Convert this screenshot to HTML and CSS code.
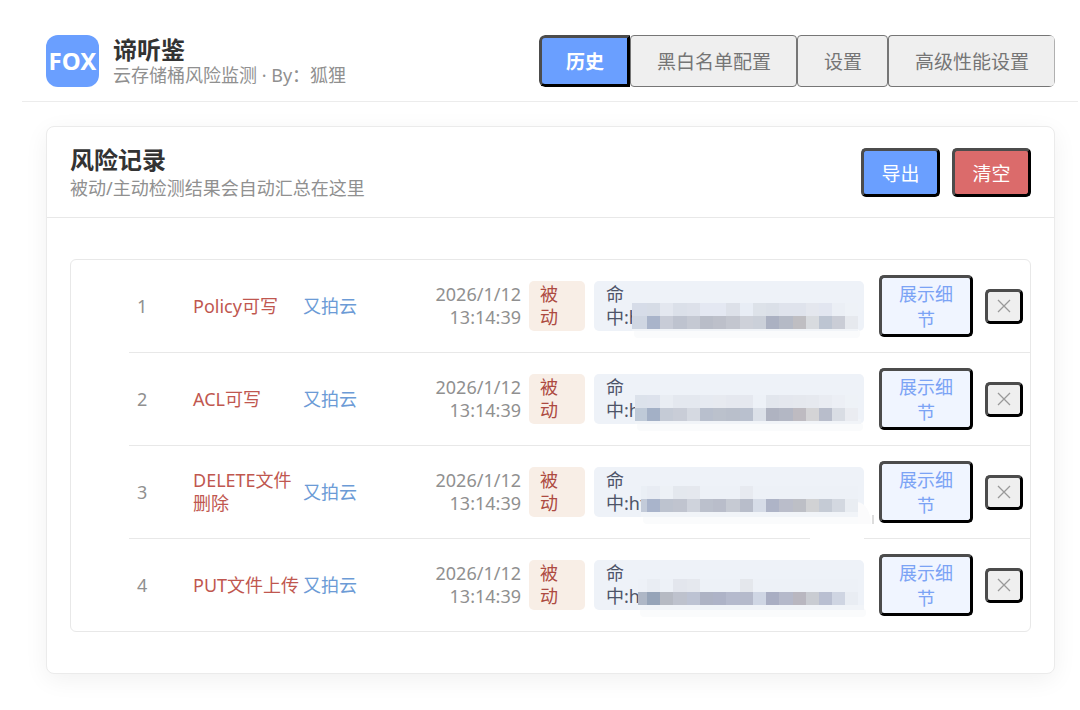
FILE: index.html
```html
<!DOCTYPE html>
<html lang="zh-CN">
<head>
    <meta charset="UTF-8">
    <meta name="viewport" content="width=device-width, initial-scale=1.0">
    <title>谛听鉴</title>
    <link rel="stylesheet" href="styles.css">
</head>
<body>
    <header class="topbar">
        <div class="brand">
            <div class="logo">FOX</div>
            <div>
                <h1 class="brand-name">谛听鉴</h1>
                <div class="subtitle">云存储桶风险监测 · By：狐狸</div>
            </div>
        </div>
        <nav class="tabs">
            <button class="tab active">历史</button>
            <button class="tab">黑白名单配置</button>
            <button class="tab">设置</button>
            <button class="tab">高级性能设置</button>
        </nav>
    </header>

    <main class="card">
        <div class="card-header">
            <div>
                <h2 class="card-title">风险记录</h2>
                <div class="subtitle">被动/主动检测结果会自动汇总在这里</div>
            </div>
            <div class="actions">
                <button class="btn btn-primary">导出</button>
                <button class="btn btn-danger">清空</button>
            </div>
        </div>
        <div class="card-body">
            <ol class="records" id="records"></ol>
        </div>
    </main>

    <script>
        // low / high: colours of the lower and upper mosaic cells over the url
        const records = [
            {
                type: "Policy可写", start: 0, y: 14,
                low: ["#cfd6e2", "#a9b4ca", "#c8ccd7", "#bec3cf", "#c5c9d3", "#b9bdc8", "#bdc0ca", "#c3c6cf", "#ced1d9", "#cbd0d9", "#abb1c2", "#b5bac6", "#bfbec2", "#d8dbdf", "#bdc5d2", "#cacdd6", "#e6e9ee"],
                high: ["#d6dce8", "#d6dce6", "#e3e7ef", "#dbe0e9", "#dde1ea", "#e4e8f2", "#e4e8f2", "#dde1e9", "#e8edf5", "#dde2e9", "#dbe0e8", "#dfe3ec", "#dfe3ec", "#e4e7ee", "#e2e6f0", "#ebeff5", "#eef2f7"]
            },
            {
                type: "ACL可写", start: 3, y: 13,
                low: ["#bfcad8", "#a3b0c6", "#c5cbd6", "#c9cdd7", "#d5d9e1", "#b8bfcd", "#bbc1cc", "#b9bfcb", "#b9c0ce", "#dbe0e8", "#afb3c1", "#b3b7c4", "#bebbc1", "#d4d4d6", "#b8bdcb", "#d9dde4", "#eaecf1"],
                high: ["#dce2eb", "#dde2ec", "#e9edf3", "#e4e8ef", "#e4e8ef", "#e6eaf1", "#e7eaf0", "#e5e8ef", "#e5e8ef", "#edf1f7", "#e2e6ed", "#e4e7ee", "#e5e8ee", "#e6e9ef", "#e9ecf2", "#eceff5", "#eef2f7"]
            },
            {
                type: "DELETE文件删除", start: 9, y: 11, erased: true,
                low: ["#c3cbd9", "#a9b4cb", "#bdc3cf", "#c0c4cf", "#cfd3dc", "#bbc0cc", "#b9bdca", "#c6cad3", "#b8bdca", "#d6dce7", "#aeb4c7", "#babdca", "#bdbfc6", "#d1d2d4", "#c5cbd5", "#d3d8e0", "#e9edf2"],
                high: ["#eaeff5", "#e8ecf3", "#edf1f6", "#e4e8ee", "#e5e8ee", "#edf1f7", "#edf1f7", "#edf1f7", "#e7eaf0", "#edf1f7", "#edf1f7", "#edf1f7", "#edf1f7", "#edf1f7", "#edf1f7", "#edf1f7", "#edf1f7"]
            },
            {
                type: "PUT文件上传", start: 6, y: 11,
                low: ["#aeb7c6", "#96a4b8", "#b6bac3", "#bec2cd", "#bdc3d3", "#aeb3c4", "#aeb3c7", "#b5bacd", "#b5bacb", "#cfd6e4", "#a9aec3", "#b5b9ca", "#b9b7c0", "#c9ccd2", "#b9bfd1", "#cfd5e2", "#e9edf3"],
                high: ["#edf1f7", "#e9edf3", "#edf1f7", "#e3e6ed", "#e5e8ee", "#edf1f7", "#edf1f7", "#edf1f7", "#e4e7ec", "#edf1f7", "#edf1f7", "#edf1f7", "#edf1f7", "#edf1f7", "#edf1f7", "#edf1f7", "#edf1f7"]
            }
        ];

        const cellX = [0, 15, 28, 41, 55, 68, 81, 94, 108, 121, 134, 147, 161, 174, 187, 200, 213, 226];

        function cells(colors, start, y) {
            return colors.map((color, i) => {
                const x = Math.max(cellX[i], start);
                return `<rect x="${x}" y="${y}" width="${cellX[i + 1] - x}" height="13" fill="${color}"/>`;
            }).join("");
        }

        function mosaic(r) {
            return `
                <svg class="mosaic" viewBox="0 0 244 44" aria-hidden="true">
                    <rect x="${r.start + 2}" y="27" width="226" height="9" rx="4" fill="#fafbfc"/>
                    <rect x="${r.start}" y="24" width="226" height="5" fill="#f1f4f8"/>
                    ${cells(r.high, r.start, r.y - 13)}
                    ${cells(r.low, r.start, r.y)}
                    ${r.erased ? `
                    <path d="M226 14 Q238 17 239 36 H226 Z" fill="#fbfbfc"/>
                    <path d="M241 27 V36" stroke="#dddddd" stroke-width="2"/>
                    <rect x="178" y="48" width="54" height="5" fill="#ffffff"/>` : ""}
                </svg>`;
        }

        document.getElementById("records").innerHTML = records.map((r, i) => `
            <li class="record">
                <span class="record-index">${i + 1}</span>
                <span class="record-type">${r.type}</span>
                <span class="record-vendor">又拍云</span>
                <span class="record-time">2026/1/12 13:14:39</span>
                <span class="record-mode">被动</span>
                <span class="record-hit">命<br>中:ht${mosaic(r)}</span>
                <button class="btn-detail">展示细节</button>
                <button class="btn-remove" aria-label="删除">
                    <svg width="14" height="14" viewBox="0 0 14 14"><path d="M1 1 L13 13 M13 1 L1 13" fill="none" stroke="#999999" stroke-width="1.3"/></svg>
                </button>
            </li>
        `).join("");
    </script>
</body>
</html>
```
FILE: styles.css
```css
* {
    box-sizing: border-box;
}
body {
    margin: 0;
    padding: 20px 2px 36px 22px;
    background: #ffffff;
    color: #333333;
    font-family: "Noto Sans", "Noto Sans CJK SC", sans-serif;
    font-size: 18px;
    line-height: 23px;
}
button {
    font-family: inherit;
    cursor: pointer;
}
h1, h2 {
    margin: 0;
}
.topbar {
    display: flex;
    justify-content: space-between;
    align-items: center;
    padding: 15px 23px 14px 24px;
    border-bottom: 1px solid #ececec;
}
.brand {
    display: flex;
    align-items: center;
    gap: 14px;
}
.logo {
    width: 53px;
    height: 52px;
    border-radius: 12px;
    background: #6a9fff;
    color: #ffffff;
    font-size: 24px;
    font-weight: bold;
    line-height: 51px;
    display: flex;
    justify-content: center;
}
.brand-name {
    padding-top: 2px;
    font-size: 24px;
    line-height: 26px;
}
.subtitle {
    color: #909090;
    line-height: 24px;
}
.tabs {
    display: flex;
    border-radius: 6px;
    overflow: hidden;
}
.tab {
    padding: 14px 25px 12px 26px;
    border: 1px solid #767676;
    border-radius: 4px;
    background: #efefef;
    color: #757575;
    font-size: 19px;
    line-height: 24px;
}
.tab:last-child {
    border-right-color: #b0b0b0;
}
.tab.active {
    padding: 12px 23px 10px 24px;
    border: 3px solid;
    border-color: #4c4c4c #000000 #000000 #4c4c4c;
    border-radius: 6px 0 0 6px;
    background: #6a9fff;
    color: #ffffff;
    font-weight: bold;
}
.card {
    margin: 24px 23px 0 24px;
    border: 1px solid #ebebeb;
    border-radius: 8px;
    background: #ffffff;
    box-shadow: 0 6px 24px rgba(0, 0, 0, 0.06);
}
.card-header {
    display: flex;
    justify-content: space-between;
    align-items: center;
    padding: 17px 23px;
    border-bottom: 1px solid #e8e8e8;
}
.card-title {
    font-size: 24px;
    line-height: 32px;
}
.actions {
    display: flex;
    gap: 12px;
}
.btn {
    min-width: 79px;
    padding: 11px 17px 8px;
    border: 3px solid;
    border-color: #4c4c4c #000000 #000000 #4c4c4c;
    border-radius: 5px;
    color: #ffffff;
    font-size: 19px;
    line-height: 24px;
}
.btn-primary {
    background: #6a9fff;
}
.btn-danger {
    background: #db6b6b;
}
.card-body {
    padding: 41px 23px;
}
.records {
    margin: 0;
    padding: 0 0 0 58px;
    list-style: none;
    border: 1px solid #e8e8e8;
    border-radius: 6px;
}
.record {
    display: flex;
    align-items: center;
    padding: 15px 7px 15px 8px;
    border-bottom: 1px solid #e8e8e8;
}
.record:last-child {
    border-bottom: none;
}
.record-index {
    width: 56px;
    color: #909090;
}
.record-type {
    width: 110px;
    color: #c0574f;
}
.record-vendor {
    width: 120px;
    color: #6c9bd6;
}
.record-time {
    width: 98px;
    color: #909090;
    text-align: right;
}
.record-mode {
    width: 56px;
    margin-left: 8px;
    padding: 2px 11px;
    border-radius: 5px;
    background: #f8eee6;
    color: #ad4a41;
}
.record-hit {
    position: relative;
    flex: 1;
    margin: 0 15px 0 9px;
    padding: 2px 12px;
    border-radius: 5px;
    background: #eef2f8;
    color: #4d5468;
}
.mosaic {
    position: absolute;
    left: 38px;
    top: 21px;
    width: 244px;
    height: 44px;
    overflow: visible;
}
.btn-detail {
    width: 94px;
    padding: 4px 15px 2px;
    border: 3px solid;
    border-color: #4c4c4c #000000 #000000 #4c4c4c;
    border-radius: 5px;
    background: #f0f5ff;
    color: #7ba3f5;
    font-size: 18px;
    line-height: 25px;
}
.btn-remove {
    display: flex;
    justify-content: center;
    align-items: center;
    width: 38px;
    height: 35px;
    margin-left: 12px;
    padding: 0;
    border: 3px solid;
    border-color: #4c4c4c #000000 #000000 #4c4c4c;
    border-radius: 5px;
    background: #efefef;
}
```
